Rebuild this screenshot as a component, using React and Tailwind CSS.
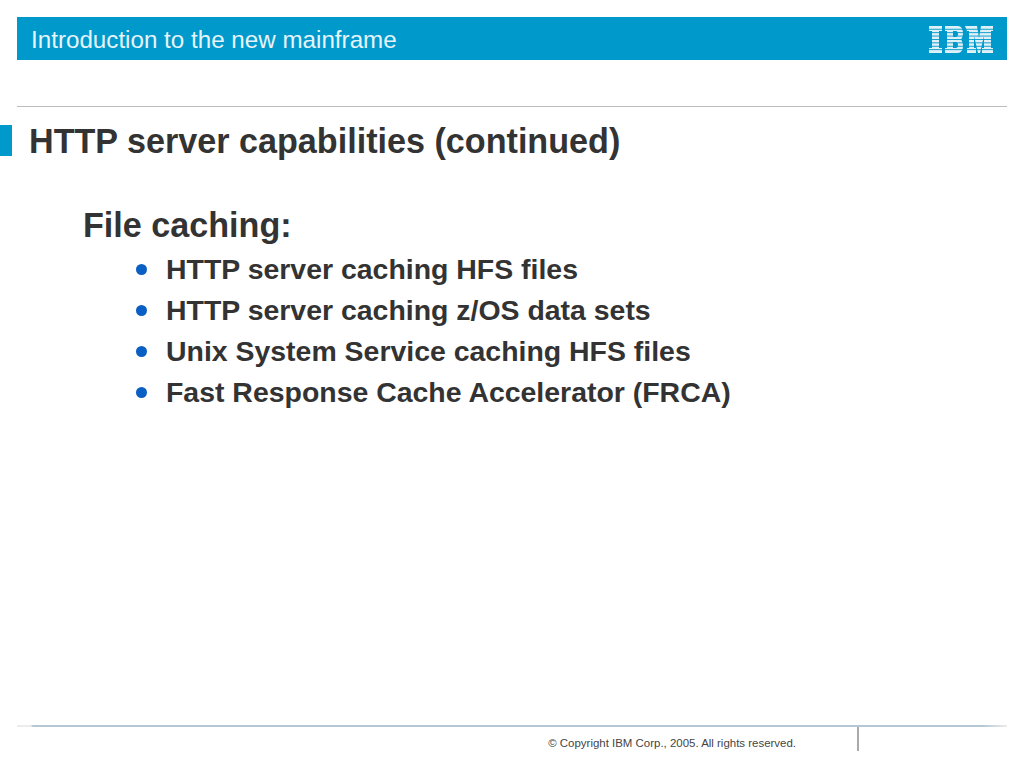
const bullets = [
  "HTTP server caching HFS files",
  "HTTP server caching z/OS data sets",
  "Unix System Service caching HFS files",
  "Fast Response Cache Accelerator (FRCA)",
];

function IbmLogo() {
  return (
    <svg width="64" height="27" viewBox="0 0 64 27">
      <g fill="#dff0f7">
        <path d="M0 0h13v5h-3v17h3v5H0v-5h3V5H0z" />
        <path fillRule="evenodd" d="M16 0h13c3 0 5 3 5 7 0 3-1 5-2 6.5 1 1.5 2 3.5 2 6.5 0 4-2 7-5 7H16v-5h2V5h-2zM24 5v6h3c1 0 2-1 2-3s-1-3-2-3zM24 16v6h3c1 0 2-1 2-3s-1-3-2-3z" />
        <path d="M36 0h12l2 12 2-12h12v5h-2v17h2v5H53v-5h2V10l-4 17h-2l-4-17v12h2v5h-9v-5h2V5h-2z" />
      </g>
      <g fill="#0099cb">
        <rect y="2.8" width="64" height="0.9" />
        <rect y="6.2" width="64" height="0.9" />
        <rect y="9.6" width="64" height="0.9" />
        <rect y="13" width="64" height="0.9" />
        <rect y="16.4" width="64" height="0.9" />
        <rect y="19.8" width="64" height="0.9" />
        <rect y="23.2" width="64" height="0.9" />
      </g>
    </svg>
  );
}

export default function App() {
  return (
    <div className="w-[1024px] h-[768px] bg-white flex flex-col font-['Liberation_Sans',Arial,sans-serif] overflow-hidden">
      {/* header bar */}
      <div className="mt-[17px] mx-[17px] h-[43px] bg-[#0099cb] flex items-center justify-between pl-[14px] pr-[14px]">
        <div className="pt-[3px] text-[24.2px] text-[#e6f4fa] leading-none">Introduction to the new mainframe</div>
        <div className="mt-[1px] flex">
          <IbmLogo />
        </div>
      </div>

      <div className="mt-[46px] ml-[17px] w-[990px] h-px bg-[#bcbcbc]" />

      {/* title */}
      <div className="mt-[18px] flex items-center h-[31px]">
        <div className="w-[12px] h-[31px] bg-[#0099cb]" />
        <h1 className="ml-[17px] pt-[2px] text-[34.15px] font-bold text-[#333333] leading-none whitespace-nowrap">
          HTTP server capabilities (continued)
        </h1>
      </div>

      {/* content */}
      <div className="mt-[50px] ml-[83px] text-[34.15px] font-bold text-[#333333] leading-[38px]">File caching:</div>
      <ul className="mt-[5px] ml-[136px] flex flex-col">
        {bullets.map((b) => (
          <li key={b} className="flex items-center h-[41px]">
            <span className="w-[11px] h-[11px] rounded-full bg-[#0a5fc4]" />
            <span className="ml-[19px] text-[28.45px] font-bold text-[#333333] leading-none whitespace-nowrap">{b}</span>
          </li>
        ))}
      </ul>

      {/* footer */}
      <div className="mt-auto mb-[17px] ml-[17px] w-[990px] relative">
        <div className="h-[2px] bg-[linear-gradient(to_right,#ececec_0%,#ececec_1.4%,#b4c8d4_1.6%,#b4c8d4_97.5%,#ececec_100%)]" />
        <div className="flex justify-end h-[24px] pr-[148px]">
          <div className="mt-[11px] mr-[61px] text-[11.46px] leading-none text-[#444444] whitespace-nowrap">
            © Copyright IBM Corp., 2005. All rights reserved.
          </div>
          <div className="w-[2px] h-[24px] bg-[#aaaaaa]" />
        </div>
      </div>
    </div>
  );
}
